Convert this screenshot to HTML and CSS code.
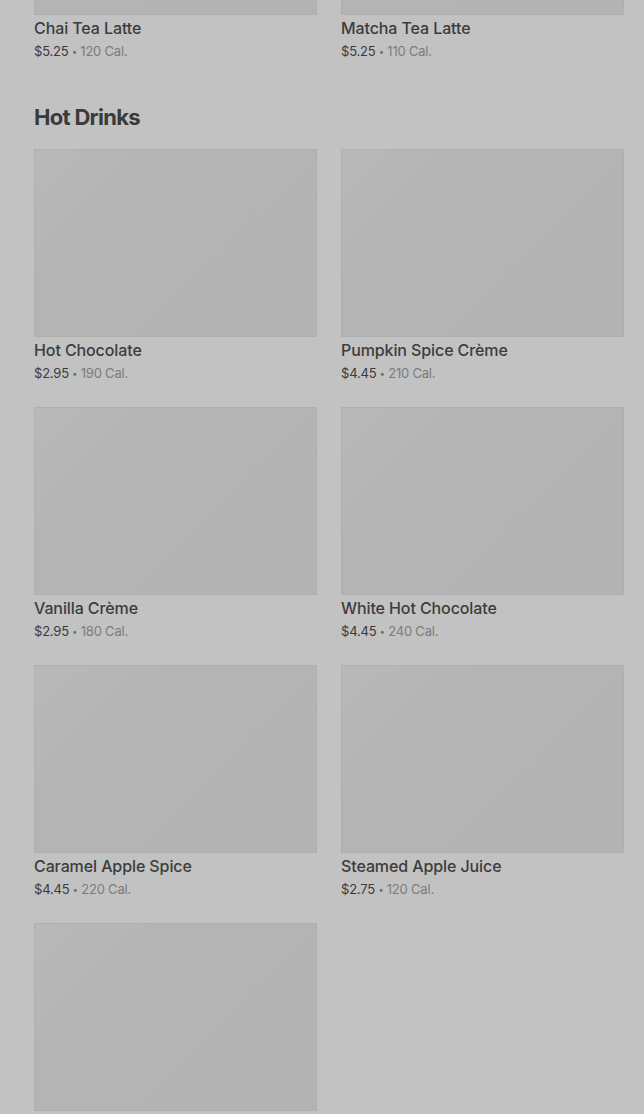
FILE: index.html
```html
<!DOCTYPE html>
<html lang="en">
<head>
<meta charset="utf-8">
<title>Menu</title>
<link rel="stylesheet" href="styles.css">
</head>
<body>
<main class="menu">
  <section class="section section-first">
    <div class="grid">
      <article class="item">
        <div class="thumb"></div>
        <h3 class="name">Chai Tea Latte</h3>
        <p class="meta"><span class="price">$5.25</span> <span class="dot">•</span> <span class="cal">120 Cal.</span></p>
      </article>
      <article class="item">
        <div class="thumb"></div>
        <h3 class="name">Matcha Tea Latte</h3>
        <p class="meta"><span class="price">$5.25</span> <span class="dot">•</span> <span class="cal">110 Cal.</span></p>
      </article>
    </div>
  </section>
  <section class="section">
    <h2 class="section-title">Hot Drinks</h2>
    <div class="grid">
      <article class="item">
        <div class="thumb"></div>
        <h3 class="name">Hot Chocolate</h3>
        <p class="meta"><span class="price">$2.95</span> <span class="dot">•</span> <span class="cal">190 Cal.</span></p>
      </article>
      <article class="item">
        <div class="thumb"></div>
        <h3 class="name">Pumpkin Spice Crème</h3>
        <p class="meta"><span class="price">$4.45</span> <span class="dot">•</span> <span class="cal">210 Cal.</span></p>
      </article>
      <article class="item">
        <div class="thumb"></div>
        <h3 class="name">Vanilla Crème</h3>
        <p class="meta"><span class="price">$2.95</span> <span class="dot">•</span> <span class="cal">180 Cal.</span></p>
      </article>
      <article class="item">
        <div class="thumb"></div>
        <h3 class="name">White Hot Chocolate</h3>
        <p class="meta"><span class="price">$4.45</span> <span class="dot">•</span> <span class="cal">240 Cal.</span></p>
      </article>
      <article class="item">
        <div class="thumb"></div>
        <h3 class="name">Caramel Apple Spice</h3>
        <p class="meta"><span class="price">$4.45</span> <span class="dot">•</span> <span class="cal">220 Cal.</span></p>
      </article>
      <article class="item">
        <div class="thumb"></div>
        <h3 class="name">Steamed Apple Juice</h3>
        <p class="meta"><span class="price">$2.75</span> <span class="dot">•</span> <span class="cal">120 Cal.</span></p>
      </article>
      <article class="item">
        <div class="thumb"></div>
      </article>
    </div>
  </section>
</main>
</body>
</html>
```
FILE: styles.css
```css
html, body {
  margin: 0;
  padding: 0;
  background: #c2c2c2;
  height: 1114px;
  overflow: hidden;
}
body {
  font-family: "Inter", "Liberation Sans", sans-serif;
  color: #3b3b3b;
}
.menu {
  margin-top: -173px;
  padding: 0 20px 0 34px;
}
.section-first {
  margin-bottom: 42px;
}
.section-title {
  margin: 0 0 18px;
  font-size: 22px;
  line-height: 28px;
  font-weight: 700;
  letter-spacing: -0.7px;
  color: #3a3a3a;
}
.grid {
  display: grid;
  grid-template-columns: 1fr 1fr;
  column-gap: 24px;
  row-gap: 24px;
}
.thumb {
  height: 188px;
  box-sizing: border-box;
  border: 1px solid #afafaf;
  background: linear-gradient(135deg, #b9b9b9 0%, #b4b4b4 30%, #b3b3b3 100%);
}
.name {
  margin: 1px 0 0;
  font-size: 16px;
  line-height: 24px;
  font-weight: 500;
  letter-spacing: -0.1px;
  color: #3c3c3c;
}
.meta {
  margin: 1px 0 0;
  height: 20px;
  font-size: 13px;
  line-height: 20px;
  letter-spacing: -0.2px;
}
.price {
  color: #3a3a3a;
}
.dot {
  color: #6a6a6a;
  font-size: 9px;
  line-height: 0;
  position: relative;
  top: -1px;
}
.cal {
  color: #7c7c7c;
}
```
